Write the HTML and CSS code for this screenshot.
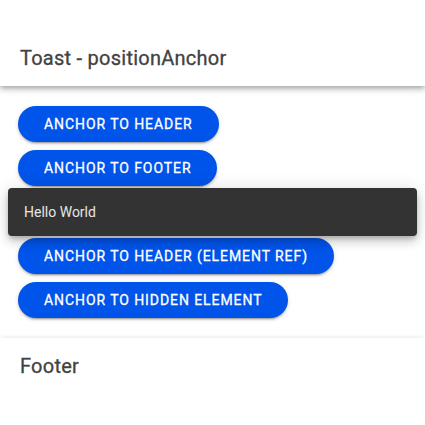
FILE: index.html
```html
<!DOCTYPE html>
<html>
<head>
<meta charset="utf-8">
<link rel="stylesheet" href="styles.css">
</head>
<body>
<div class="app">
  <header class="header">
    <div class="toolbar"><h1 class="title">Toast - positionAnchor</h1></div>
  </header>
  <main class="content">
    <button class="btn">Anchor to Header</button>
    <button class="btn">Anchor to Footer</button>
    <button class="btn btn-covered">Anchor to Footer (Element Ref)</button>
    <button class="btn">Anchor to Header (Element Ref)</button>
    <button class="btn">Anchor to Hidden Element</button>
  </main>
  <footer class="footer">
    <div class="toolbar"><h2 class="title">Footer</h2></div>
  </footer>
  <div class="toast">Hello World</div>
</div>
</body>
</html>
```
FILE: styles.css
```css
* { box-sizing: border-box; }
html, body { margin: 0; padding: 0; background: #fff; }
body { font-family: Roboto, "Noto Sans", sans-serif; }
.app { position: relative; height: 425px; overflow: hidden; display: flex; flex-direction: column; }
.header {
  padding-top: 30px;
  background: #fff;
  position: relative;
  z-index: 2;
  box-shadow: 0 2px 4px -1px rgba(0,0,0,0.2), 0 4px 5px 0 rgba(0,0,0,0.14), 0 1px 10px 0 rgba(0,0,0,0.12);
}
.toolbar { height: 56px; display: flex; align-items: center; padding: 0 20px; }
.title {
  margin: 0;
  font-size: 20px;
  font-weight: 400;
  letter-spacing: 0.0125em;
  color: #424242;
  -webkit-text-stroke: 0.3px #424242;
}
.content {
  padding: 16px;
  display: flex;
  flex-direction: column;
  align-items: flex-start;
}
.btn {
  margin: 4px 2px;
  height: 36px;
  padding: 0 26px;
  border: none;
  border-radius: 18px;
  background: #0054e9;
  color: #fff;
  font-family: Roboto, sans-serif;
  font-size: 14px;
  font-weight: 400;
  letter-spacing: 0.066em;
  text-transform: uppercase;
  -webkit-text-stroke: 0.3px #fff;
  box-shadow: 0 3px 1px -2px rgba(0,0,0,0.2), 0 2px 2px 0 rgba(0,0,0,0.14), 0 1px 5px 0 rgba(0,0,0,0.12);
}
.btn-covered { visibility: hidden; }
.footer {
  background: #fff;
  box-shadow: 0 -2px 4px -1px rgba(0,0,0,0.06), 0 -1px 3px 0 rgba(0,0,0,0.03);
}
.toast {
  position: absolute;
  left: 8px;
  right: 8px;
  top: 188px;
  height: 48px;
  display: flex;
  align-items: center;
  padding: 0 16px;
  background: #333;
  color: #e6e6e6;
  font-size: 14px;
  border-radius: 4px;
  z-index: 5;
  box-shadow: 0 3px 5px -1px rgba(0,0,0,0.2), 0 6px 10px 0 rgba(0,0,0,0.14), 0 1px 18px 0 rgba(0,0,0,0.12);
}
```
